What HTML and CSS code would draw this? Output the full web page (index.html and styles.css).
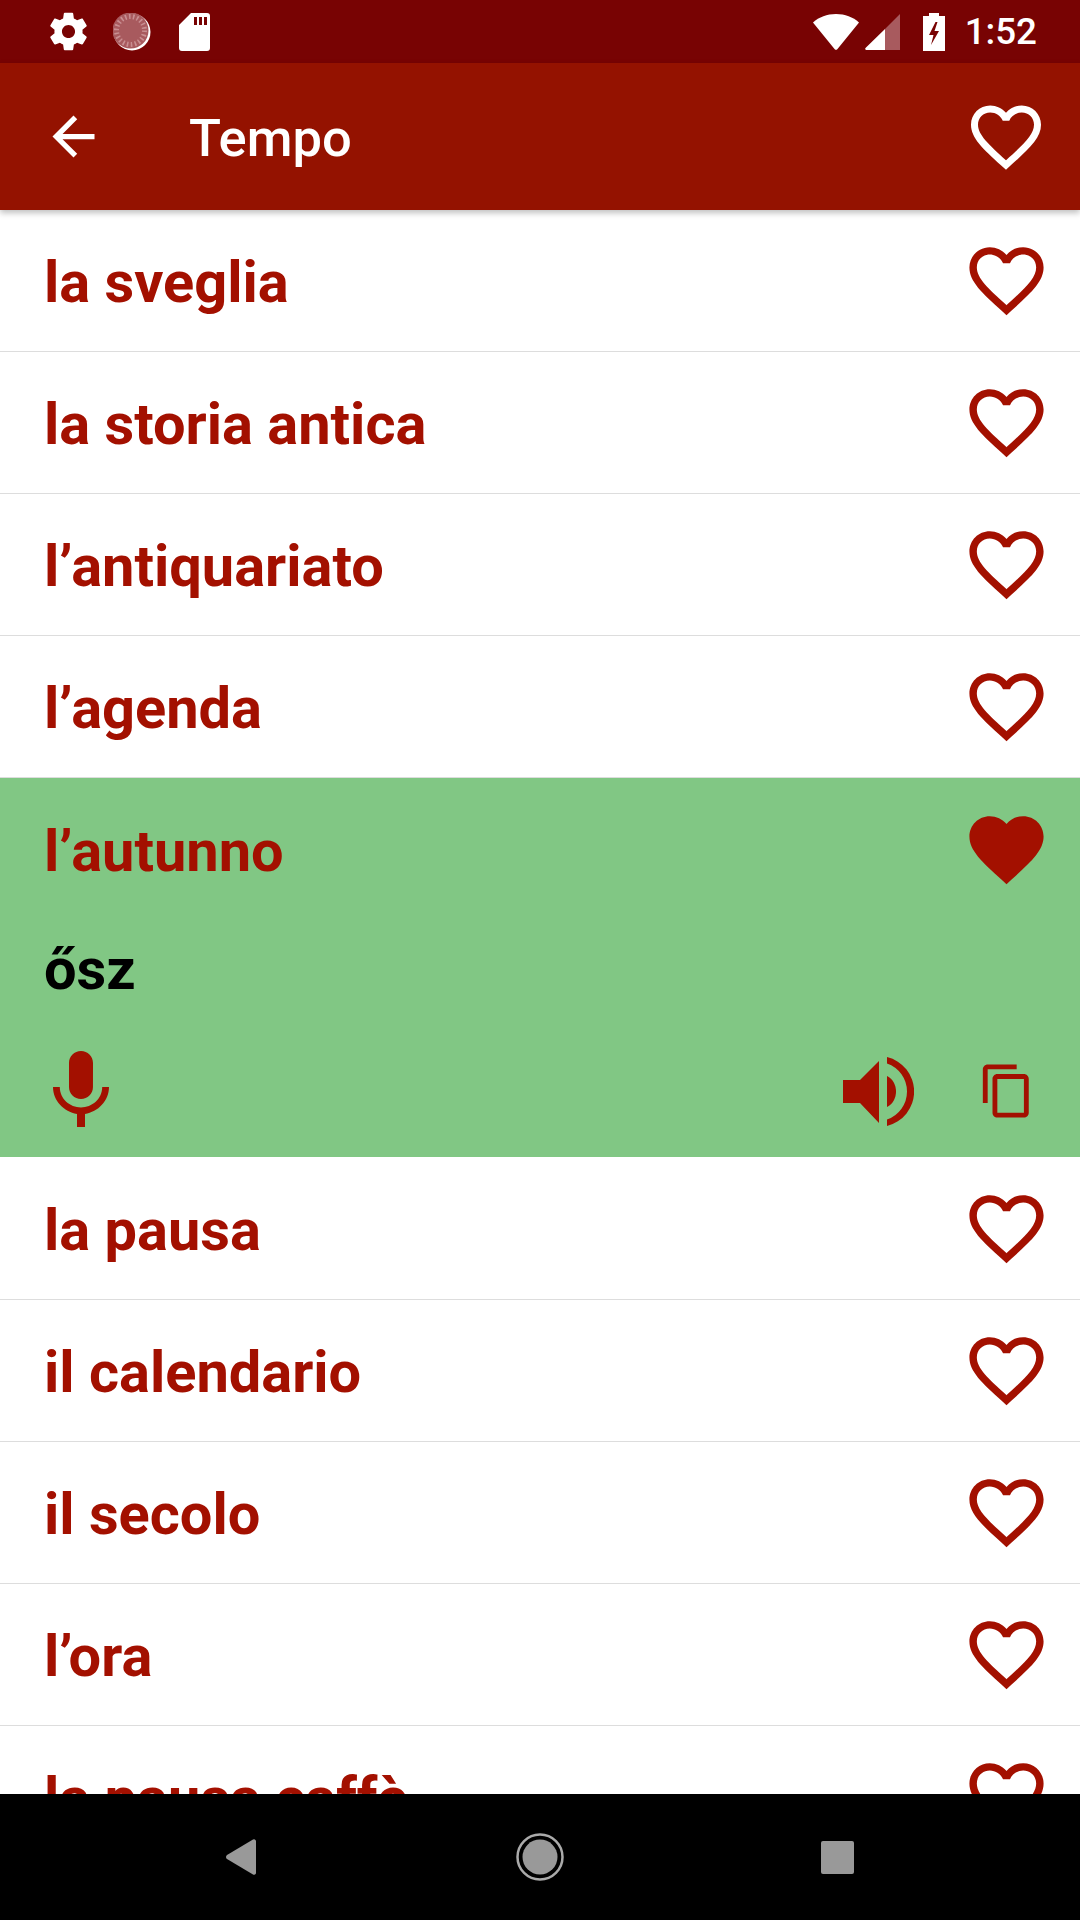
FILE: index.html
```html
<!DOCTYPE html>
<html lang="it">
<head>
    <meta charset="UTF-8">
    <meta name="viewport" content="width=device-width, initial-scale=1.0">
    <title>Tempo</title>
    <link rel="stylesheet" href="styles.css">
</head>
<body>
    <svg class="defs" width="0" height="0">
        <symbol id="heart" viewBox="0 0 24 24"><path d="M16.5 3c-1.74 0-3.41.81-4.5 2.09C10.91 3.81 9.24 3 7.5 3 4.42 3 2 5.42 2 8.5c0 3.78 3.4 6.86 8.55 11.54L12 21.35l1.45-1.32C18.6 15.36 22 12.28 22 8.5 22 5.42 19.58 3 16.5 3zm-4.4 15.55l-.1.1-.1-.1C7.14 14.24 4 11.39 4 8.5 4 6.5 5.5 5 7.5 5c1.54 0 3.04.99 3.57 2.36h1.87C13.46 5.99 14.96 5 16.5 5c2 0 3.5 1.5 3.5 3.5 0 2.89-3.14 5.74-7.9 10.05z"/></symbol>
        <symbol id="heart-full" viewBox="0 0 24 24"><path d="M12 21.35l-1.45-1.32C5.4 15.36 2 12.28 2 8.5 2 5.42 4.42 3 7.5 3c1.74 0 3.41.81 4.5 2.09C13.09 3.81 14.76 3 16.5 3 19.58 3 22 5.42 22 8.5c0 3.78-3.4 6.86-8.55 11.54L12 21.35z"/></symbol>
    </svg>

    <div class="statusbar">
        <div class="status-left">
            <svg class="ic-gear" viewBox="0 0 24 24"><path d="M19.43 12.98c.04-.32.07-.64.07-.98s-.03-.66-.07-.98l2.11-1.65c.19-.15.24-.42.12-.64l-2-3.46c-.12-.22-.39-.3-.61-.22l-2.49 1c-.52-.4-1.08-.73-1.69-.98l-.38-2.65C14.46 2.18 14.25 2 14 2h-4c-.25 0-.46.18-.49.42l-.38 2.65c-.61.25-1.17.59-1.69.98l-2.49-1c-.23-.09-.49 0-.61.22l-2 3.46c-.13.22-.07.49.12.64l2.11 1.65c-.04.32-.07.65-.07.98s.03.66.07.98l-2.11 1.65c-.19.15-.24.42-.12.64l2 3.46c.12.22.39.3.61.22l2.49-1c.52.4 1.08.73 1.69.98l.38 2.65c.03.24.24.42.49.42h4c.25 0 .46-.18.49-.42l.38-2.65c.61-.25 1.17-.59 1.69-.98l2.49 1c.23.09.49 0 .61-.22l2-3.46c.12-.22.07-.49-.12-.64l-2.11-1.65zM12 15.5c-1.93 0-3.5-1.57-3.5-3.5s1.57-3.5 3.5-3.5 3.5 1.57 3.5 3.5-1.57 3.5-3.5 3.5z"/></svg>
            <svg class="ic-loader" viewBox="0 0 38 38">
                <circle cx="19" cy="19" r="18.5" fill="#fff"/>
                <circle cx="17.5" cy="17.5" r="18" fill="#a85a5e"/>
                <circle cx="17.5" cy="17.5" r="14" fill="none" stroke="#c98f92" stroke-width="5" stroke-dasharray="1.6 2.4"/>
            </svg>
            <svg class="ic-sd" viewBox="0 0 31 38"><path d="M12 0h16a3 3 0 0 1 3 3v32a3 3 0 0 1-3 3H3a3 3 0 0 1-3-3V12zM15 4v8h3V4zM20 4v8h3V4zM25 4v8h3V4z" fill-rule="evenodd"/></svg>
        </div>
        <div class="status-right">
            <svg class="ic-wifi" viewBox="0 0 46 36"><path d="M23 0C14 0 6 3 0 8.500L21.500 35a2 2 0 0 0 3 0L46 8.500C40 3 32 0 23 0z"/></svg>
            <svg class="ic-signal" viewBox="0 0 35 36">
                <path d="M35 0v36H20V15z" fill="#a85a5e"/>
                <path d="M20 15v21H1.500a1.200 1.200 0 0 1-1-2z"/>
            </svg>
            <svg class="ic-battery" viewBox="0 0 22 38"><path d="M6 0h10v3h6v35H0V3h6zM12.500 9L6 22h4.500L8 32l8-14h-4.500l3-9z" fill-rule="evenodd"/></svg>
            <span class="clock">1:52</span>
        </div>
    </div>

    <header class="appbar">
        <svg class="ic-back" viewBox="0 0 24 24"><path d="M20 11H7.830l5.590-5.590L12 4l-8 8 8 8 1.410-1.410L7.830 13H20z"/></svg>
        <h1 class="appbar-title">Tempo</h1>
        <svg class="ic-heart-top"><use href="#heart"/></svg>
    </header>

    <main class="list">
        <div class="row"><span class="word">la sveglia</span><svg class="ic-heart"><use href="#heart"/></svg></div>
        <div class="row"><span class="word">la storia antica</span><svg class="ic-heart"><use href="#heart"/></svg></div>
        <div class="row"><span class="word">l’antiquariato</span><svg class="ic-heart"><use href="#heart"/></svg></div>
        <div class="row"><span class="word">l’agenda</span><svg class="ic-heart"><use href="#heart"/></svg></div>

        <div class="open-row">
            <div class="row row-open"><span class="word">l’autunno</span><svg class="ic-heart"><use href="#heart-full"/></svg></div>
            <div class="translation">ősz</div>
            <div class="actions">
                <svg class="ic-mic" viewBox="0 0 24 24"><path d="M12 14c1.66 0 2.99-1.34 2.99-3L15 5c0-1.66-1.34-3-3-3S9 3.340 9 5v6c0 1.66 1.34 3 3 3zm5.300-3c0 3-2.540 5.100-5.300 5.100S6.700 14 6.700 11H5c0 3.410 2.720 6.230 6 6.720V21h2v-3.280c3.280-.48 6-3.300 6-6.720h-1.700z"/></svg>
                <div class="actions-right">
                    <svg class="ic-speaker" viewBox="0 0 71 69">
                        <path d="M0 23h17L36 4v62L17 46H0z"/>
                        <path d="M44 19c12 6 12 25 0 31z"/>
                        <path d="M44 0a35.500 35.500 0 0 1 0 69v-6.500a29.600 29.600 0 0 0 0-56z"/>
                    </svg>
                    <svg class="ic-copy" viewBox="0 0 24 24"><path d="M16 1H4c-1.100 0-2 .9-2 2v14h2V3h12V1zm3 4H8c-1.100 0-2 .9-2 2v14c0 1.100.9 2 2 2h11c1.100 0 2-.9 2-2V7c0-1.100-.9-2-2-2zm0 16H8V7h11v14z"/></svg>
                </div>
            </div>
        </div>

        <div class="row"><span class="word">la pausa</span><svg class="ic-heart"><use href="#heart"/></svg></div>
        <div class="row"><span class="word">il calendario</span><svg class="ic-heart"><use href="#heart"/></svg></div>
        <div class="row"><span class="word">il secolo</span><svg class="ic-heart"><use href="#heart"/></svg></div>
        <div class="row"><span class="word">l’ora</span><svg class="ic-heart"><use href="#heart"/></svg></div>
        <div class="row"><span class="word">la pausa caffè</span><svg class="ic-heart"><use href="#heart"/></svg></div>
    </main>

    <footer class="navbar">
        <svg class="nav-back" viewBox="0 0 30 36"><path d="M27 0.500a2 2 0 0 1 3 1.500v32a2 2 0 0 1-3 1.500L1 20a2.500 2.500 0 0 1 0-4z"/></svg>
        <svg class="nav-home" viewBox="0 0 48 48">
            <circle cx="24" cy="24" r="22.500" fill="none" stroke="#aaa" stroke-width="2.500"/>
            <circle cx="24" cy="24" r="17.500"/>
        </svg>
        <div class="nav-square"></div>
    </footer>
</body>
</html>
```

FILE: styles.css
```css
* {
    box-sizing: border-box;
}

html, body {
    height: 100%;
}

body {
    margin: 0;
    width: 1080px;
    height: 1920px;
    display: flex;
    flex-direction: column;
    overflow: hidden;
    font-family: Roboto, "Noto Sans", sans-serif;
    background-color: #fff;
}

svg {
    display: block;
    flex: none;
}

.defs {
    position: absolute;
}

/* barre d'etat */
.statusbar {
    flex: 0 0 63px;
    display: flex;
    justify-content: space-between;
    align-items: center;
    padding: 0 43px 0 50px;
    background-color: #780303;
    fill: #fff;
}

.status-left, .status-right {
    display: flex;
    align-items: center;
}

.ic-gear {
    width: 45px;
    height: 45px;
    margin: 0 -4px;
}

.ic-loader {
    width: 38px;
    height: 38px;
    margin-left: 26px;
}

.ic-sd {
    width: 31px;
    height: 38px;
    margin-left: 28px;
}

.ic-wifi {
    width: 46px;
    height: 36px;
}

.ic-signal {
    width: 35px;
    height: 36px;
    margin-left: 6px;
}

.ic-battery {
    width: 22px;
    height: 38px;
    margin-left: 23px;
}

.clock {
    margin-left: 20px;
    font-size: 36.75px;
    font-weight: 500;
    color: #fff;
}

/* barre de titre */
.appbar {
    flex: 0 0 147px;
    display: flex;
    align-items: center;
    padding: 0 32px 0 42px;
    background-color: #941200;
    box-shadow: 0 3px 6px rgba(0, 0, 0, 0.25);
    position: relative;
    z-index: 1;
    fill: #fff;
}

.ic-back {
    width: 63px;
    height: 63px;
}

.appbar-title {
    flex: 1;
    margin: 0 0 0 84px;
    padding-top: 3px;
    font-size: 52.5px;
    font-weight: 500;
    color: #fff;
}

.ic-heart-top {
    width: 84px;
    height: 84px;
}

/* liste des mots */
.list {
    flex: 1;
    overflow: hidden;
    fill: #a31000;
}

.row {
    height: 142px;
    display: flex;
    align-items: center;
    justify-content: space-between;
    padding: 0 29px 0 44px;
    border-bottom: 1px solid #ddd;
}

.word {
    padding-top: 3px;
    font-size: 57.75px;
    font-weight: 700;
    color: #a31000;
}

.ic-heart {
    width: 89px;
    height: 89px;
}

.open-row {
    height: 380px;
    background-color: #81c784;
    border-bottom: 1px solid #fff;
}

.row-open {
    border-bottom: none;
}

.translation {
    padding: 17px 0 0 44px;
    font-size: 57.75px;
    font-weight: 700;
    line-height: 64px;
    color: #000;
}

.actions {
    display: flex;
    justify-content: space-between;
    align-items: center;
    padding: 0 44px 0 33px;
    margin-top: 42px;
}

.ic-mic {
    width: 96px;
    height: 96px;
}

.actions-right {
    display: flex;
    align-items: center;
}

.ic-speaker {
    width: 71px;
    height: 69px;
}

.ic-copy {
    width: 58px;
    height: 58px;
    margin-left: 64px;
}

/* navigation android */
.navbar {
    flex: 0 0 126px;
    display: flex;
    align-items: center;
    background-color: #000;
    fill: #999;
    padding-left: 226px;
}

.nav-back {
    width: 30px;
    height: 36px;
}

.nav-home {
    width: 48px;
    height: 48px;
    margin-left: 260px;
}

.nav-square {
    width: 33px;
    height: 33px;
    margin-left: 257px;
    border-radius: 2px;
    background-color: #999;
}
```
